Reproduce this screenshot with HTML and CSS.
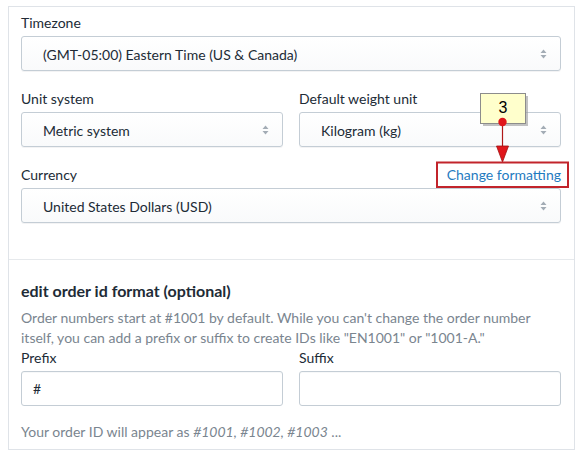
FILE: index.html
```html
<!DOCTYPE html>
<html>
<head>
<meta charset="utf-8">
<link rel="stylesheet" href="styles.css">
</head>
<body>
<div class="card">
  <div class="section first">
    <div class="field">
      <div class="label">Timezone</div>
      <div class="select"><span>(GMT-05:00) Eastern Time (US &amp; Canada)</span><svg class="caret" width="7" height="10" viewBox="0 0 7 10"><path d="M3.5 0.5 L6.5 4 L0.5 4 Z M3.5 9.5 L6.5 6 L0.5 6 Z" fill="#a3acb5"/></svg></div>
    </div>
    <div class="row">
      <div class="field">
        <div class="label">Unit system</div>
        <div class="select"><span>Metric system</span><svg class="caret" width="7" height="10" viewBox="0 0 7 10"><path d="M3.5 0.5 L6.5 4 L0.5 4 Z M3.5 9.5 L6.5 6 L0.5 6 Z" fill="#a3acb5"/></svg></div>
      </div>
      <div class="field">
        <div class="label">Default weight unit</div>
        <div class="select"><span>Kilogram (kg)</span><svg class="caret" width="7" height="10" viewBox="0 0 7 10"><path d="M3.5 0.5 L6.5 4 L0.5 4 Z M3.5 9.5 L6.5 6 L0.5 6 Z" fill="#a3acb5"/></svg></div>
      </div>
    </div>
    <div class="field">
      <div class="label split"><span>Currency</span><a class="link">Change formatting</a></div>
      <div class="select"><span>United States Dollars (USD)</span><svg class="caret" width="7" height="10" viewBox="0 0 7 10"><path d="M3.5 0.5 L6.5 4 L0.5 4 Z M3.5 9.5 L6.5 6 L0.5 6 Z" fill="#a3acb5"/></svg></div>
    </div>
  </div>
  <div class="section second">
    <h2 class="heading">edit order id format (optional)</h2>
    <p class="desc">Order numbers start at #1001 by default. While you can't change the order number itself, you can add a prefix or suffix to create IDs like "EN1001" or "1001-A."</p>
    <div class="row tight">
      <div class="field">
        <div class="label">Prefix</div>
        <div class="input">#</div>
      </div>
      <div class="field">
        <div class="label">Suffix</div>
        <div class="input"></div>
      </div>
    </div>
    <p class="note">Your order ID will appear as <em>#1001, #1002, #1003</em> ...</p>
  </div>
</div>
<svg class="callout" width="585" height="461" viewBox="0 0 585 461">
  <rect x="483" y="96" width="45" height="30" fill="#9a9a9a" opacity="0.6"/>
  <rect x="480.5" y="93.5" width="45" height="30" fill="#ffffcc" stroke="#8c8c8c"/>
  <text x="503" y="113" text-anchor="middle" font-family="Liberation Sans, Arial, sans-serif" font-size="16" fill="#000">3</text>
  <line x1="502.5" y1="122" x2="502.5" y2="146" stroke="#b01818" stroke-width="1.2"/>
  <path d="M496.5 146 L508.5 146 L502.5 162 Z" fill="#e0161b" stroke="#a01010" stroke-width="0.8"/>
  <circle cx="502.5" cy="122" r="4.2" fill="#e0161b"/>
  <rect x="437" y="162.5" width="131" height="24.5" fill="none" stroke="#c2242b" stroke-width="2"/>
</svg>
</body>
</html>
```
FILE: styles.css
```css
html, body {
  margin: 0;
  padding: 0;
  background: #ffffff;
}
body {
  position: relative;
  width: 585px;
  height: 461px;
  font-family: "Lato", "Open Sans", sans-serif;
  font-size: 14px;
  color: #212b36;
  padding-top: 6px;
  box-sizing: border-box;
}
.card {
  margin-left: 8px;
  width: 567px;
  box-sizing: border-box;
  border: 1px solid #dfe3e8;
  background: #fff;
}
.section {
  padding-left: 12px;
  padding-right: 13px;
}
.first {
  padding-top: 5px;
  padding-bottom: 36px;
  border-bottom: 1px solid #e6e9ec;
  display: flex;
  flex-direction: column;
  gap: 17px;
}
.second {
  padding-top: 19px;
  padding-bottom: 7px;
}
.row {
  display: grid;
  grid-template-columns: 1fr 1fr;
  gap: 16px;
}
.label {
  line-height: 20px;
  padding-top: 1px;
  margin-bottom: 3px;
}
.tight .label {
  padding-top: 0;
  margin-bottom: 3px;
}
.split {
  display: flex;
  justify-content: space-between;
}
.link {
  color: #1f7bbf;
}
.select {
  height: 35px;
  box-sizing: border-box;
  border: 1px solid #c4cdd5;
  border-radius: 3px;
  background: linear-gradient(#ffffff, #f9fafb);
  box-shadow: 0 1px 0 rgba(22, 29, 37, 0.05);
  display: flex;
  align-items: center;
  justify-content: space-between;
  padding-left: 21px;
  padding-right: 13px;
  padding-top: 1px;
}
.input {
  height: 35px;
  box-sizing: border-box;
  border: 1px solid #c4cdd5;
  border-radius: 3px;
  background: #fff;
  display: flex;
  align-items: center;
  padding-left: 11px;
  box-shadow: inset 0 1px 0 rgba(99, 115, 129, 0.05);
}
.heading {
  margin: 0;
  font-size: 16px;
  font-weight: 700;
  line-height: 24px;
}
.desc {
  margin: 5px 0 0 0;
  line-height: 20px;
  color: #7a858f;
}
.note {
  margin: 16px 0 0 0;
  line-height: 20px;
  color: #7a858f;
}
.callout {
  position: absolute;
  left: 0;
  top: 0;
  pointer-events: none;
}
```
